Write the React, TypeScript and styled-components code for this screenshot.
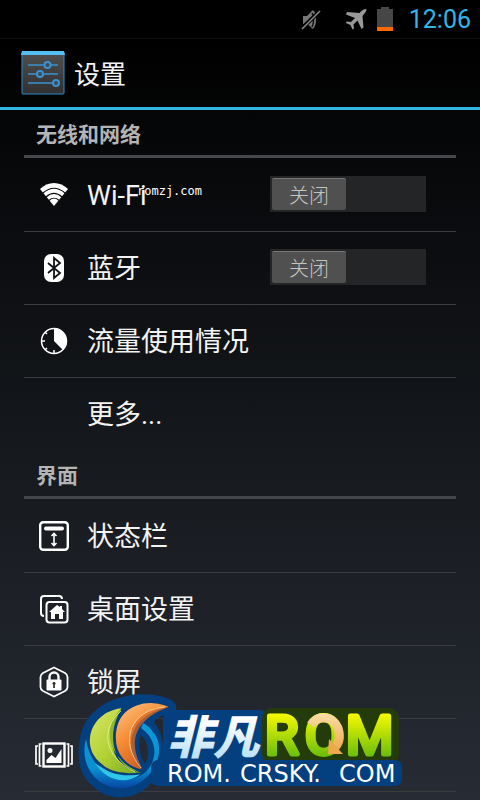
import React from "react";
import styled, { createGlobalStyle } from "styled-components";

const Global = createGlobalStyle`
  * { box-sizing: border-box; }
  html { height: 100%; background: #000; }
  body {
    margin: 0;
    height: 100%;
    overflow: hidden;
    color: #f3f3f3;
    font-family: Roboto, "Noto Sans CJK SC", sans-serif;
  }
  #root { height: 100%; }
`;

const Screen = styled.div`
  position: relative;
  display: flex;
  flex-direction: column;
  height: 100vh;
  overflow: hidden;
  background: linear-gradient(#000 5%, #07080a 20%, #15181c 55%, #272b34 100%);
`;

const StatusBar = styled.div`
  display: flex;
  flex: none;
  align-items: center;
  justify-content: flex-end;
  height: 39px;
  padding-right: 9px;
  background: #000;
  border-bottom: 1px solid #101010;
`;

const StatusIcons = styled.div`
  display: flex;
  align-items: center;
`;

const PlaneSlot = styled.span`
  display: flex;
  margin: 0 10px 0 23px;
`;

const Clock = styled.time`
  margin-left: 16px;
  padding-top: 2px;
  color: #33b5e5;
  font-size: 25px;
  line-height: 36px;
`;

const Header = styled.header`
  display: flex;
  flex: none;
  align-items: center;
  gap: 9px;
  height: 71px;
  padding-left: 21px;
  border-bottom: 3px solid #33b5e5;
`;

const Title = styled.h1`
  margin: 0;
  padding-top: 4px;
  font-size: 26px;
  font-weight: 400;
  line-height: 36px;
`;

const Main = styled.main`
  padding: 0 24px;
`;

const SectionTitle = styled.h2`
  margin: 0;
  padding: 10px 12px 5px;
  border-bottom: 3px solid #45474a;
  color: #b4b4b4;
  font-size: 21px;
  font-weight: 700;
  line-height: 30px;
`;

const List = styled.ul`
  margin: 0;
  padding: 0 0 1px;
  list-style: none;
`;

const Row = styled.li`
  display: flex;
  align-items: center;
  height: 73px;
  border-top: 1px solid #3a3c40;
  &:first-child { border-top-color: transparent; }
`;

const RowLink = styled.a`
  display: flex;
  flex: 1;
  align-items: center;
  color: inherit;
  font-size: 27px;
  line-height: 40px;
  text-decoration: none;
  white-space: nowrap;
`;

const RowLabel = styled.span`
  padding-top: 2px;
`;

const IconSlot = styled.span`
  display: flex;
  flex: none;
  justify-content: center;
  width: 60px;
  margin-right: 3px;
`;

const Switch = styled.button`
  width: 156px;
  height: 36px;
  margin: 0 30px 2px 0;
  padding: 2px;
  border: 0;
  background: #242526;
`;

const Thumb = styled.span`
  display: block;
  width: 74px;
  height: 32px;
  border-top: 1px solid #777;
  border-radius: 2px;
  background: #505050;
  color: #c4c4c4;
  font-family: "Noto Sans CJK SC", sans-serif;
  font-size: 20px;
  font-weight: 300;
  line-height: 32px;
  text-align: center;
`;

const SiteMark = styled.span`
  position: absolute;
  top: 183px;
  left: 137px;
  color: #fff;
  font-family: "DejaVu Sans Mono", monospace;
  font-size: 12px;
  line-height: 16px;
`;

const Watermark = styled.div`
  position: absolute;
  bottom: 0;
  left: 75px;
  width: 330px;
  height: 110px;
`;

const MuteIcon = () => (
  <svg width="22" height="24" viewBox="0 0 22 24">
    <path d="M3 9h4l4-4c1-3 5-2 5 7s-4 12-5 8l-4-3H3z" fill="#777" />
    <path d="M12 6c2 3 2 10 0 14" stroke="#111" strokeWidth="1.5" fill="none" />
    <path d="M1 22L20 4" stroke="#000" strokeWidth="4" />
    <path d="M2 22L20 4" stroke="#888" strokeWidth="1.6" />
  </svg>
);

const PlaneIcon = () => (
  <svg width="22" height="22" viewBox="0 0 22 22">
    <path d="M21.500 1c-3 0-4.500 1.500-7 4L2 4 1 6.500l9 3.500-4 4-4.500-.5L1 15l4.500 2 2 4.500 1.500-1-.5-4 4-4 4 8.500 2-1.500L17.500 8c2.500-3 4-4.500 4-7z" fill="#999" />
  </svg>
);

const BatteryIcon = () => (
  <svg width="16" height="24" viewBox="0 0 16 24">
    <path d="M4 2V0h8v2h4v18H0V2z" fill="#464646" />
    <path d="M0 20h16v4H0z" fill="#ff6a00" />
  </svg>
);

const SettingsIcon = () => (
  <svg width="44" height="44" viewBox="0 0 44 44">
    <defs>
      <linearGradient id="tile" x2="0" y2="1">
        <stop stopColor="#505050" /><stop offset="1" stopColor="#303030" />
      </linearGradient>
    </defs>
    <rect x="1" y="1" width="42" height="42" rx="1" fill="url(#tile)" stroke="#2f8ac8" />
    <path d="M1 0h42l1 4H0z" fill="#55bdf0" />
    <g stroke="#3d91cf" strokeWidth="1.3" fill="#3c4a55">
      <path d="M7 14h30M7 23h30M7 32h26" />
      <g strokeWidth="2">
        <circle cx="26.500" cy="14" r="3" /><circle cx="19" cy="23" r="3" /><circle cx="35" cy="32" r="3" />
      </g>
    </g>
  </svg>
);

const WifiIcon = () => (
  <svg width="30" height="26" viewBox="0 0 30 26">
    <path d="M1 7C9-1 21-1 29 7L15 24z" fill="#fff" />
    <g fill="none" stroke="#0b0c0e" strokeWidth="1.100">
      <path d="M4 11c7-6 15-6 22 0M7 15c5-4.500 11-4.500 16 0M10 18.500c3-3 7-3 10 0" />
    </g>
  </svg>
);

const BluetoothIcon = () => (
  <svg width="20" height="28" viewBox="0 0 20 28">
    <rect width="20" height="28" rx="7" fill="#fff" />
    <path d="M4 9l12 10-6 5V4l6 5L4 19" fill="none" stroke="#101214" strokeWidth="1.800" />
  </svg>
);

const DataIcon = () => (
  <svg width="28" height="28" viewBox="0 0 28 28">
    <circle cx="14" cy="14" r="12.500" fill="none" stroke="#fff" strokeWidth="1.500" />
    <path d="M14 1a13 13 0 0 1 9 22l-9-9z" fill="#fff" />
    <path d="M14 23v4M1 14h4M5 5l2 2M5 23l2-2" stroke="#fff" strokeWidth="1.500" />
  </svg>
);

const StatusIcon = () => (
  <svg width="30" height="30" viewBox="0 0 30 30" fill="none" stroke="#fff">
    <rect x="1.200" y="1.200" width="27.600" height="27.600" rx="3" strokeWidth="2.400" />
    <path d="M7 7.500h16" strokeWidth="4" strokeLinecap="round" />
    <path d="M15 13v11M12.500 15L15 12.500l2.500 2.500M12.500 22L15 24.500l2.500-2.500" strokeWidth="1.600" />
  </svg>
);

const HomeIcon = () => (
  <svg width="30" height="30" viewBox="0 0 30 30" fill="none" stroke="#fff" strokeWidth="2">
    <path d="M5 22c-2 0-3-1-3-3V5c0-2 1-3 3-3h15c2 0 3 1 3 3" />
    <rect x="7.500" y="8" width="21" height="20.500" rx="3" />
    <path d="M18 11l-8 7h2v7h4v-5h4v5h4v-7h2l-3-3v-3h-2v1z" fill="#fff" stroke="none" />
  </svg>
);

const LockIcon = () => (
  <svg width="30" height="32" viewBox="0 0 30 32">
    <path d="M15 1.500L26 7q2.500 1.500 2.500 4v10q0 2.500-2.500 4L15 30.500 4 25q-2.500-1.500-2.500-4V11q0-2.500 2.500-4z" fill="none" stroke="#fff" strokeWidth="1.800" />
    <path d="M10.500 15v-4a4.500 4.500 0 0 1 9 0v4" fill="none" stroke="#fff" strokeWidth="2.400" />
    <rect x="7.500" y="13.500" width="15" height="11" rx="1" fill="#fff" />
    <path d="M15 16v6M13.500 17.500h3" stroke="#222" strokeWidth="1.600" />
  </svg>
);

const GalleryIcon = () => (
  <svg width="40" height="26" viewBox="0 0 40 26" fill="none" stroke="#fff">
    <rect x="9.500" y="1.500" width="21" height="23" strokeWidth="2.400" />
    <path d="M7.500 2H5.500v22h2M32.500 2h2v22h-2M4 4H2v18h2M36 4h2v18h-2" strokeWidth="1.700" />
    <path d="M12.500 21v-3l5-5 4 3 6-9v14z" fill="#fff" stroke="none" />
    <circle cx="16" cy="8.500" r="2.500" fill="#fff" stroke="none" />
  </svg>
);

const WatermarkLogo = () => (
  <svg width="330" height="110" viewBox="0 0 330 110" role="img" aria-label="非凡ROM">
    <defs>
      <linearGradient id="leaf" x1="0" x2="1" y2="1">
        <stop stopColor="#dce66b" /><stop offset=".5" stopColor="#b2d235" /><stop offset="1" stopColor="#74a51d" />
      </linearGradient>
      <linearGradient id="flame" x1="0" x2=".6" y2="1">
        <stop stopColor="#ffc98a" /><stop offset=".5" stopColor="#f58a32" /><stop offset="1" stopColor="#c9531c" />
      </linearGradient>
      <linearGradient id="ring" x2="0" y2="1">
        <stop stopColor="#0a9ad8" /><stop offset=".7" stopColor="#0a8fd0" /><stop offset="1" stopColor="#0646a4" />
      </linearGradient>
      <linearGradient id="ice" x2="0" y2="1">
        <stop offset=".3" stopColor="#fff" /><stop offset="1" stopColor="#a9d9f5" />
      </linearGradient>
      <linearGradient id="lime" gradientUnits="userSpaceOnUse" x1="0" y1="24" x2="0" y2="67">
        <stop stopColor="#f6f900" /><stop offset="1" stopColor="#68bd0c" />
      </linearGradient>
      <linearGradient id="gold" gradientUnits="userSpaceOnUse" x1="0" y1="24" x2="0" y2="67">
        <stop stopColor="#f9dca6" /><stop offset="1" stopColor="#eda338" />
      </linearGradient>
    </defs>
    <path fillRule="evenodd" d="M52 6C68 2 91 5 99 12c5 6 1 12-5 12-8 1-12 4-15 8 12 15 13 39 1 56-15 24-48 25-63 7C3 84 2 65 5 48 9 26 26 11 52 6zM66 45c-3 8-2 20 4 29 5-8 4-22-4-29z" fill="#043f80" />
    <path d="M11 49C4 76 22 99 47 98 77 97 94 60 78 42q-4-6-10-9l-2 5c13 9 17 24 10 37C62 100 18 93 11 49z" fill="url(#ring)" />
    <path d="M20 73c11 18 33 24 49 8-17 7-33 4-49-8z" fill="#2fc6ea" />
    <path d="M48 17C14 20 4 56 24 73q14 15 44 10C34 76 31 45 48 17z" fill="url(#leaf)" stroke="#053f7c" strokeWidth="2" />
    <path d="M47 18C27 36 30 67 66 83 36 76 31 43 47 18z" fill="#8fb82a" />
    <path d="M46 21C26 38 27 66 60 82" fill="none" stroke="#e6ef9c" strokeWidth=".8" />
    <path d="M96 17C75 6 43 13 40 43c-2 23 12 35 29 38C48 55 54 27 96 17z" fill="url(#flame)" stroke="#053f7c" strokeWidth="2" />
    <path d="M94 17C55 18 44 52 68 80 50 49 63 28 94 17z" fill="#dd6b22" opacity=".75" />
    <path d="M90 17C56 20 43 50 66 78" fill="none" stroke="#ffd7a4" strokeWidth=".8" />
    <rect x="88" y="20" width="106" height="60" rx="9" fill="#043f80" />
    <rect x="187" y="18" width="137" height="56" rx="10" fill="#243c0b" />
    <rect x="76" y="70" width="251" height="26" rx="7" fill="#043f80" />
    <text x="92" y="64" fill="url(#ice)" fontFamily='"Noto Sans CJK SC", sans-serif' fontWeight="900" fontSize="46" fontStyle="italic">非凡</text>
    <g fill="url(#lime)" stroke="url(#lime)" strokeWidth="5" strokeLinejoin="round" fontFamily="Roboto, sans-serif" fontSize="54">
      <text x="190" y="64">R</text>
      <text x="230" y="64">O</text>
      <text x="271" y="64">M</text>
    </g>
    <path d="M236 35C243 24 258 26 263 38q4 13-4 20" fill="none" stroke="url(#gold)" strokeWidth="9" />
    <path d="M254 49l14 15H253z" fill="#eda94a" />
    <g fill="#fff" fontFamily='"DejaVu Sans", sans-serif' fontSize="24">
      <text x="92" y="92">ROM.</text>
      <text x="165" y="92">CRSKY.</text>
      <text x="264" y="92">COM</text>
    </g>
  </svg>
);

type Item = { label?: string; name?: string; icon?: React.ReactNode; toggle?: boolean };

const network: Item[] = [
  { label: "Wi-Fi", icon: <WifiIcon />, toggle: true },
  { label: "蓝牙", icon: <BluetoothIcon />, toggle: true },
  { label: "流量使用情况", icon: <DataIcon /> },
  { label: "更多..." },
];

const interfaceItems: Item[] = [
  { label: "状态栏", icon: <StatusIcon /> },
  { label: "桌面设置", icon: <HomeIcon /> },
  { label: "锁屏", icon: <LockIcon /> },
  { name: "图库", icon: <GalleryIcon /> },
  {},
];

const Section = ({ title, items }: { title: string; items: Item[] }) => (
  <section>
    <SectionTitle>{title}</SectionTitle>
    <List>
      {items.map((item, i) => (
        <Row key={i}>
          {(item.label || item.icon) && (
            <RowLink href="#" aria-label={item.name}>
              <IconSlot>{item.icon}</IconSlot>
              {item.label && <RowLabel>{item.label}</RowLabel>}
            </RowLink>
          )}
          {item.toggle && (
            <Switch type="button" role="switch" aria-checked="false" aria-label={item.label}>
              <Thumb>关闭</Thumb>
            </Switch>
          )}
        </Row>
      ))}
    </List>
  </section>
);

export default function App() {
  return (
    <>
      <Global />
      <Screen>
        <StatusBar>
          <StatusIcons>
            <MuteIcon />
            <PlaneSlot><PlaneIcon /></PlaneSlot>
            <BatteryIcon />
          </StatusIcons>
          <Clock>12:06</Clock>
        </StatusBar>
        <Header><SettingsIcon /><Title>设置</Title></Header>
        <Main>
          <Section title="无线和网络" items={network} />
          <Section title="界面" items={interfaceItems} />
        </Main>
        <SiteMark>romzj.com</SiteMark>
        <Watermark><WatermarkLogo /></Watermark>
      </Screen>
    </>
  );
}
